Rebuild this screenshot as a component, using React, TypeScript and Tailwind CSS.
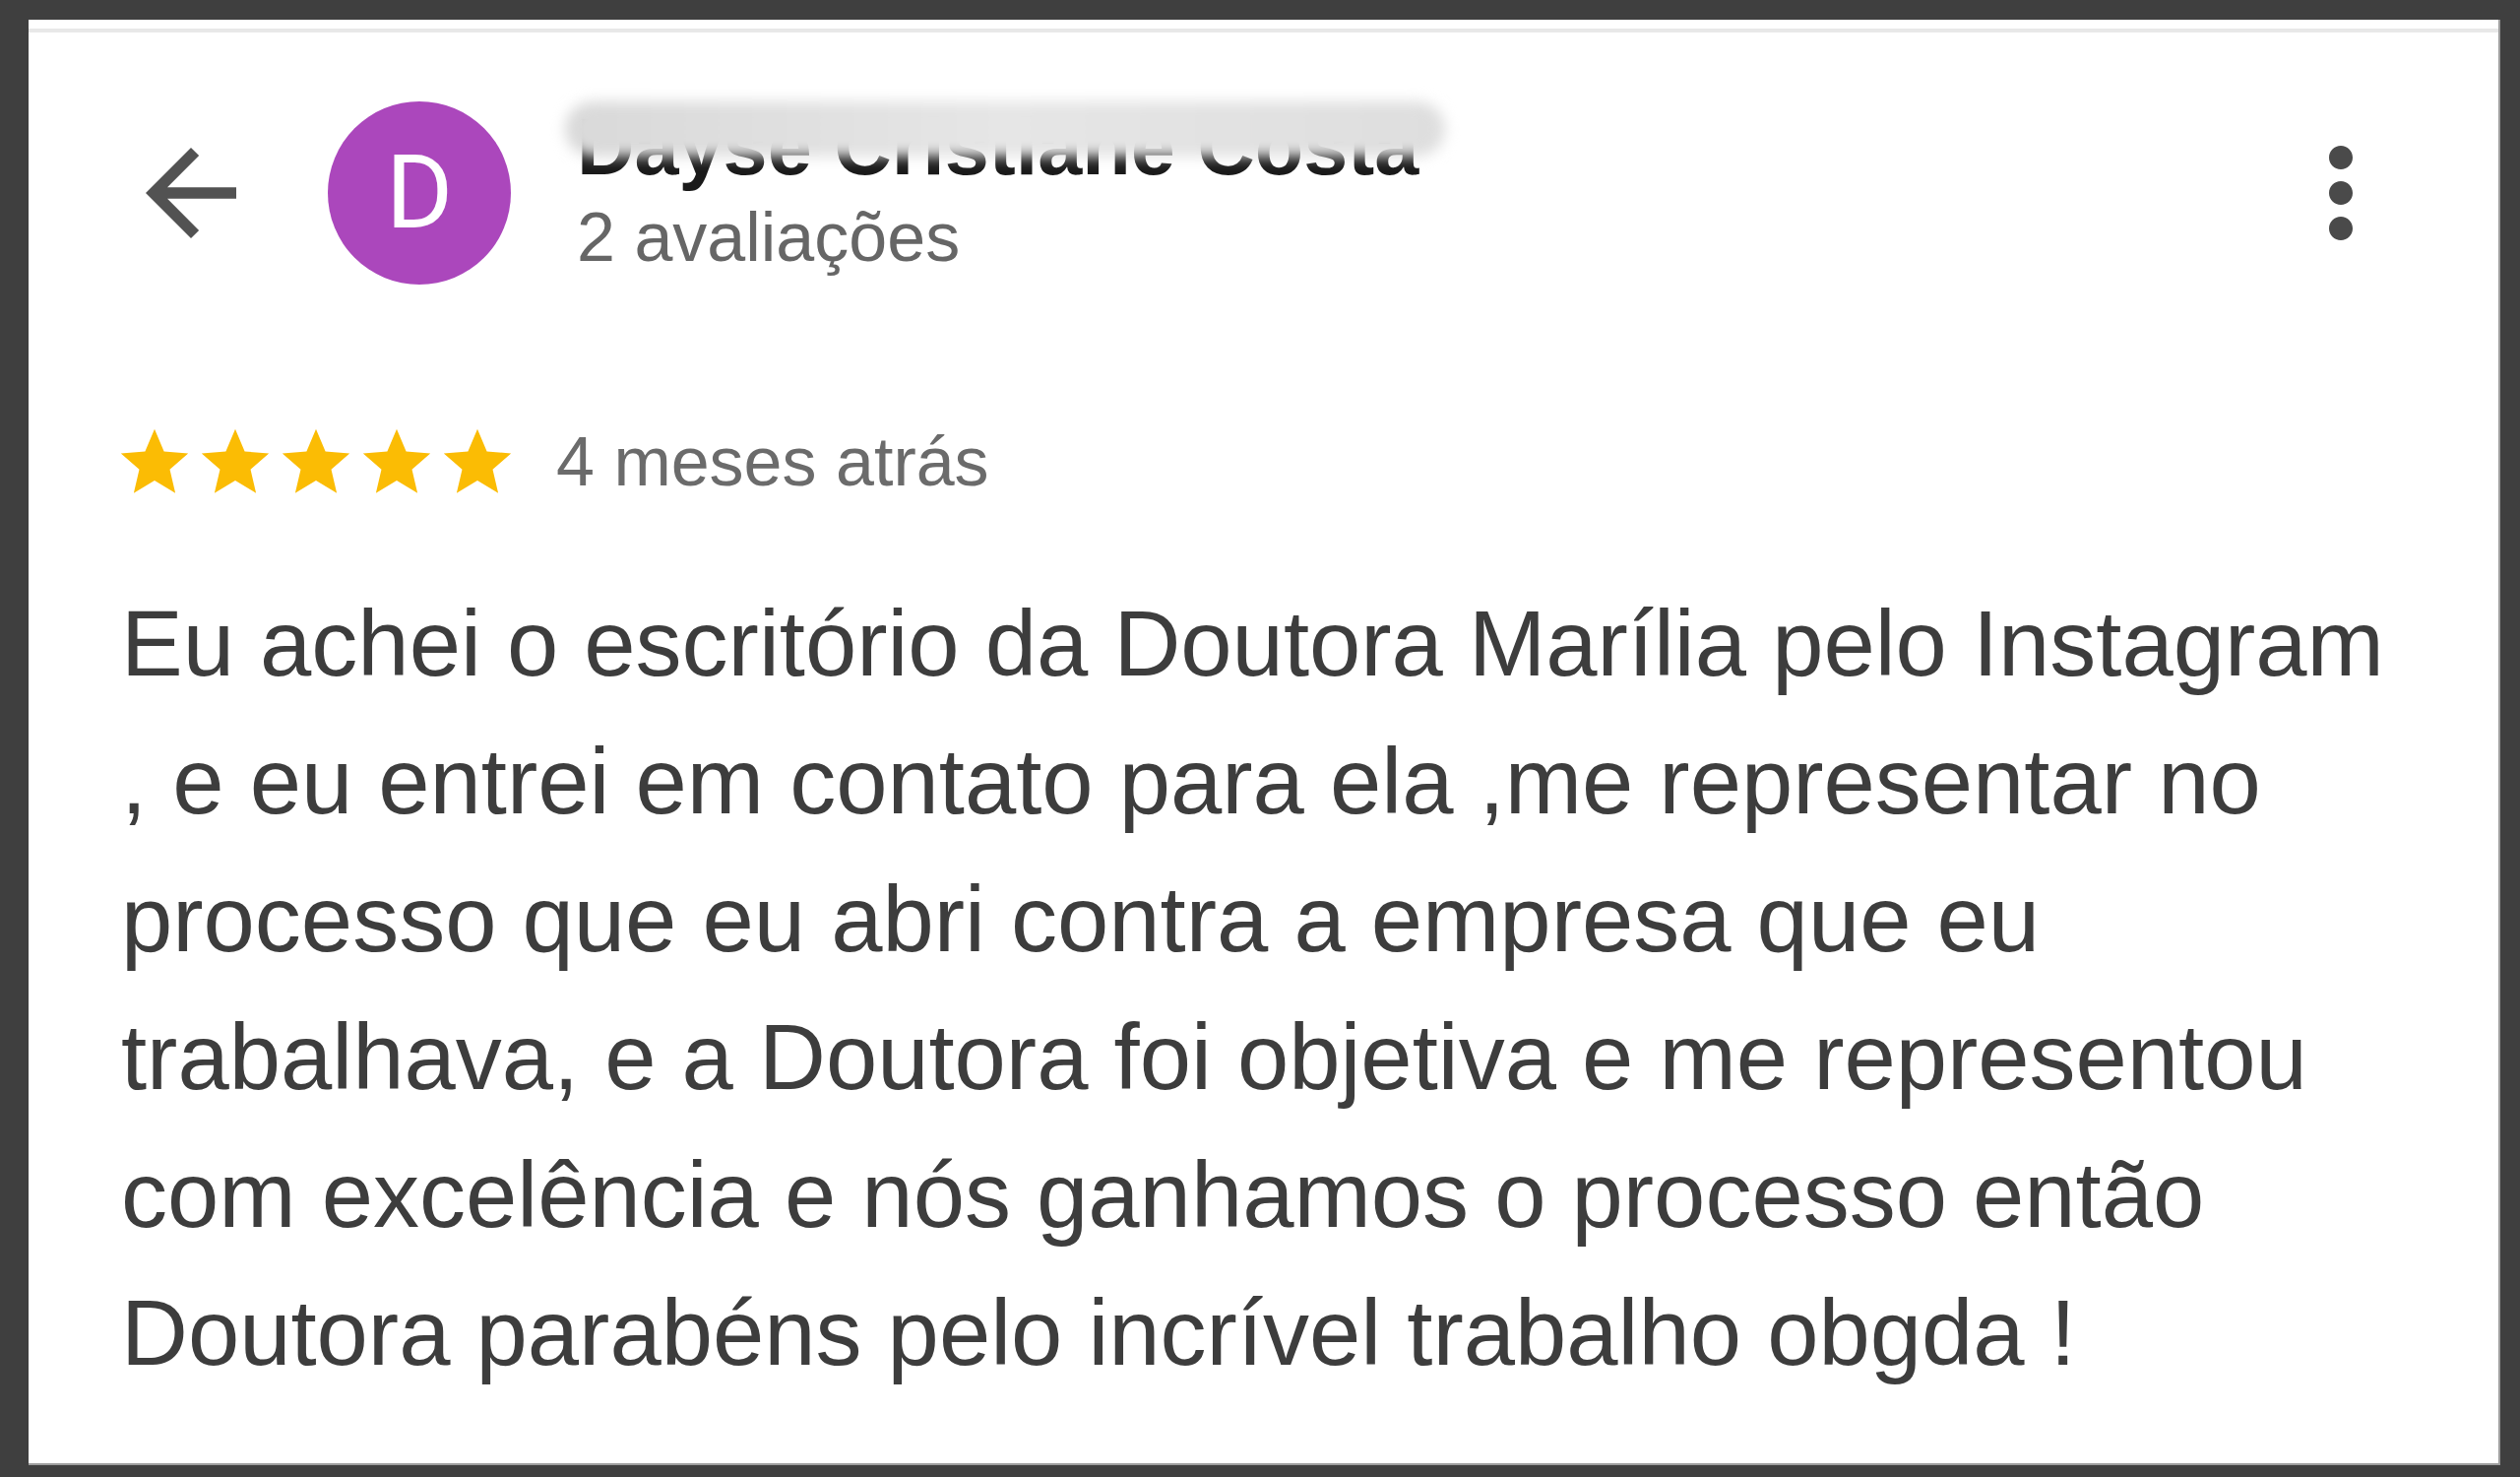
import React from 'react';

const reviewLines = [
  'Eu achei o escritório da Doutora Marília pelo Instagram',
  ', e eu entrei em contato para ela ,me representar no',
  'processo que eu abri contra a empresa que eu',
  'trabalhava, e a Doutora foi objetiva e me representou',
  'com excelência e nós ganhamos o processo então',
  'Doutora parabéns pelo incrível trabalho obgda !',
];

const BackArrow = () => (
  <svg width="138" height="138" viewBox="0 0 24 24" className="shrink-0 text-[#525252]">
    <path fill="currentColor" d="M20 11H7.83l5.59-5.59L12 4l-8 8 8 8 1.41-1.41L7.83 13H20v-2z" />
  </svg>
);

const MoreVert = () => (
  <svg width="144" height="144" viewBox="0 0 24 24" className="shrink-0 text-[#4a4a4a]">
    <path
      fill="currentColor"
      d="M12 8c1.1 0 2-.9 2-2s-.9-2-2-2-2 .9-2 2 .9 2 2 2zm0 2c-1.1 0-2 .9-2 2s.9 2 2 2 2-.9 2-2-.9-2-2-2zm0 6c-1.1 0-2 .9-2 2s.9 2 2 2 2-.9 2-2-.9-2-2-2z"
    />
  </svg>
);

const Star = () => (
  <svg width="82" height="82" viewBox="0 0 24 24" className="shrink-0 text-[#fbbc04]">
    <path fill="currentColor" d="M12 17.27L18.18 21l-1.64-7.03L22 9.24l-7.19-.61L12 2 9.19 8.63 2 9.24l5.46 4.73L5.82 21z" />
  </svg>
);

export default function App() {
  return (
    <div className="w-[2560px] h-[1500px] bg-[#3f3f3f] flex pt-[20px] pl-[29px] pr-[20px] pb-[12px] font-['Liberation_Sans',Arial,sans-serif]">
      <div className="flex-1 bg-white flex flex-col border-r-2 border-b-2 border-[#9e9e9e]">
        {/* thin divider under the status area */}
        <div className="mt-[9px] h-[4px] bg-[#e8e8e8]" />

        {/* header */}
        <div className="mt-[70px] h-[186px] flex items-center pl-[96px] pr-[88px]">
          <BackArrow />
          <div className="ml-[70px] w-[186px] h-[186px] rounded-full bg-[#ab47bc] flex items-center justify-center shrink-0">
            <span className="text-white text-[104px] leading-none font-['Roboto',sans-serif]">D</span>
          </div>
          <div className="ml-[67px] self-start -mt-[2px] flex flex-col">
            <div className="relative">
              <span className="block text-[81px] leading-[96px] font-bold text-[#1a1a1a] whitespace-nowrap">
                Dayse Cristiane Costa
              </span>
              {/* privacy smudge over the upper half of the name */}
              <div className="absolute left-[-12px] top-[2px] w-[894px] h-[56px] rounded-full blur-[7px] bg-gradient-to-r from-[#d9d9d9] via-[#e6e6e6] to-[#dedede]" />
            </div>
            <span className="mt-[4px] text-[70px] leading-[80px] text-[#666666] whitespace-nowrap">2 avaliações</span>
          </div>
          <div className="flex-1" />
          <MoreVert />
        </div>

        {/* rating row */}
        <div className="mt-[140px] flex items-start pl-[87px]">
          <div className="flex">
            <Star />
            <Star />
            <Star />
            <Star />
            <Star />
          </div>
          <span className="ml-[39px] text-[70px] leading-[80px] text-[#6b6b6b] whitespace-nowrap">4 meses atrás</span>
        </div>

        {/* review body */}
        <div className="mt-[73px] pl-[94px] text-[94px] leading-[140px] text-[#3d3d3d]">
          {reviewLines.map((line, i) => (
            <div key={i} className="whitespace-nowrap">
              {line}
            </div>
          ))}
        </div>
      </div>
    </div>
  );
}
